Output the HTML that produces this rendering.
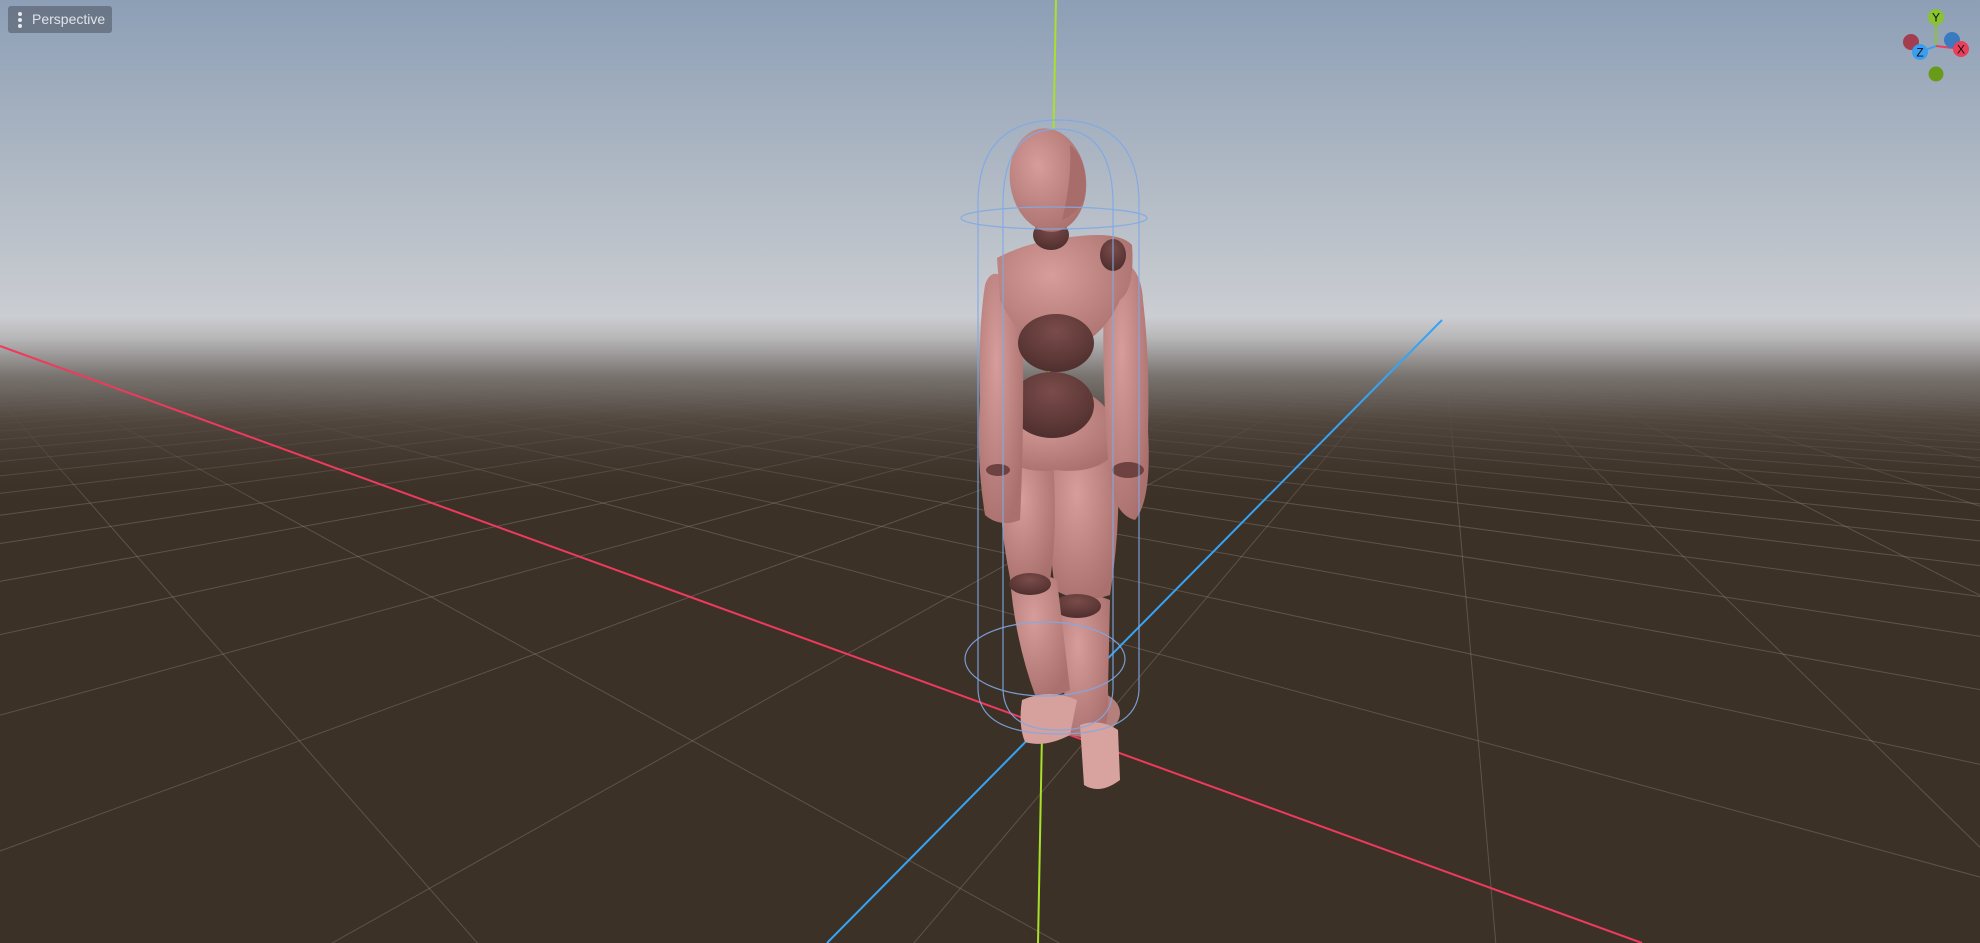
<!DOCTYPE html>
<html><head><meta charset="utf-8"><style>
html,body{margin:0;padding:0;width:1980px;height:943px;overflow:hidden;background:#3c3127}
svg{display:block;overflow:hidden;position:absolute;left:0;top:0}
.btn{position:absolute;left:8px;top:6px;width:104px;height:27px;background:rgba(95,105,120,0.75);border-radius:3px;font-family:"Liberation Sans",sans-serif;font-size:14px;color:#dfe3ea;line-height:27px}
.btn span{position:absolute;left:24px}
.dots{position:absolute;left:10px;top:6px;width:4px}
.dots i{display:block;width:4px;height:4px;border-radius:2px;background:#e6e9ee;margin-bottom:2px}
</style></head><body>
<svg id="s" width="1980" height="943" viewBox="0 0 1980 943" xmlns="http://www.w3.org/2000/svg">
<defs>
<linearGradient id="sky" x1="0" y1="0" x2="0" y2="1">
<stop offset="0" stop-color="#8d9fb6"/><stop offset="0.6" stop-color="#b4bcc6"/><stop offset="1" stop-color="#cdcfd3"/>
</linearGradient>
<linearGradient id="fog" x1="0" y1="0" x2="0" y2="1">
<stop offset="0" stop-color="#cbccd0" stop-opacity="1"/>
<stop offset="0.1" stop-color="#b9b9bb" stop-opacity="1"/>
<stop offset="0.3" stop-color="#7a7571" stop-opacity="1"/>
<stop offset="0.55" stop-color="#524840" stop-opacity="0.9"/>
<stop offset="1" stop-color="#3c3127" stop-opacity="0"/>
</linearGradient>
<radialGradient id="pk" cx="0.4" cy="0.35" r="0.7"><stop offset="0" stop-color="#d69d9a"/><stop offset="1" stop-color="#a9706e"/></radialGradient>
<radialGradient id="dk" cx="0.5" cy="0.3" r="0.7"><stop offset="0" stop-color="#7a4c4a"/><stop offset="1" stop-color="#4f2f2e"/></radialGradient>
</defs>
<rect width="1980" height="330" fill="url(#sky)"/>
<rect y="320" width="1980" height="623" fill="#3c3127"/>
<g id="grid" stroke="#9a948c" stroke-opacity="0.35" stroke-width="1" fill="none"></g>
<rect y="318" width="1980" height="190" fill="url(#fog)"/>
<line x1="0" y1="346" x2="1642" y2="943" stroke="#ef3a5d" stroke-width="2"/>
<line x1="1442" y1="320" x2="827" y2="943" stroke="#35a4f5" stroke-width="2"/>
<line x1="1056" y1="0" x2="1038" y2="943" stroke="#a8e02a" stroke-width="2"/>
<g>
<ellipse cx="1090" cy="713" rx="30" ry="22" fill="#b57f7c"/>
<path d="M1057 600 Q1080 588 1110 600 L1108 690 Q1110 735 1096 740 L1070 735 Q1062 690 1057 600Z" fill="url(#pk)"/>
<path d="M1080 725 Q1100 718 1118 730 L1120 780 Q1100 795 1084 785Z" fill="#d8a29f"/>
<path d="M1053 440 Q1090 430 1117 450 Q1122 520 1110 595 Q1080 605 1055 590 Q1045 520 1053 440Z" fill="url(#pk)"/>
<ellipse cx="1077" cy="606" rx="24" ry="12" fill="url(#dk)"/>
<path d="M1010 578 Q1040 570 1057 580 L1070 690 Q1050 700 1035 695 Q1015 640 1010 578Z" fill="url(#pk)"/>
<path d="M1022 700 Q1050 688 1077 700 L1070 735 Q1045 748 1025 742 Q1018 725 1022 700Z" fill="#d6a09d"/>
<path d="M1000 455 Q1030 450 1053 462 Q1058 530 1050 580 Q1025 590 1010 578 Q998 520 1000 455Z" fill="url(#pk)"/>
<ellipse cx="1030" cy="584" rx="21" ry="11" fill="url(#dk)"/>
<path d="M995 410 Q1040 390 1090 395 Q1118 410 1117 450 Q1100 475 1055 470 Q1015 475 998 450Z" fill="url(#pk)"/>
<ellipse cx="1052" cy="405" rx="42" ry="33" fill="url(#dk)"/>
<path d="M985 285 Q990 270 1000 275 L1022 300 Q1025 420 1020 520 Q1000 528 985 515 Q976 460 980 400 Q978 330 985 285Z" fill="url(#pk)"/>
<path d="M1105 260 Q1140 255 1143 300 Q1150 360 1148 430 Q1152 500 1135 520 Q1115 515 1110 480 Q1100 380 1105 260Z" fill="url(#pk)"/>
<ellipse cx="1128" cy="470" rx="16" ry="8" fill="#6d4240"/>
<ellipse cx="998" cy="470" rx="12" ry="6" fill="#6d4240"/>
<path d="M997 258 Q1030 240 1080 236 Q1120 232 1132 245 Q1135 290 1120 300 Q1100 345 1060 350 Q1020 345 1000 300Z" fill="url(#pk)"/>
<ellipse cx="1056" cy="343" rx="38" ry="29" fill="url(#dk)"/>
<ellipse cx="1113" cy="255" rx="13" ry="16" fill="url(#dk)"/>
<ellipse cx="1051" cy="235" rx="18" ry="15" fill="url(#dk)"/>
<ellipse cx="1048" cy="180" rx="38" ry="52" fill="url(#pk)" transform="rotate(-8 1048 180)"/>
<path d="M1070 145 Q1090 160 1084 200 Q1075 215 1062 220 Q1072 180 1070 145Z" fill="#a86d6b"/>
</g>
<g fill="none" stroke="#7fa9e6" stroke-width="1.2" stroke-opacity="0.9">
<path d="M978 690 L978 200 Q980 120 1058 120 Q1137 120 1139 200 L1139 690 Q1137 734 1058 734 Q980 734 978 690Z"/>
<path d="M1003 690 L1003 200 Q1005 129 1058 129 Q1111 129 1113 200 L1113 690 Q1111 730 1058 730 Q1005 730 1003 690Z"/>
<ellipse cx="1054" cy="218" rx="93" ry="11"/>
<ellipse cx="1045" cy="659" rx="80" ry="37"/>
</g>
<line x1="1936" y1="17" x2="1936" y2="46" stroke="#8ac230" stroke-width="2"/>
<line x1="1936" y1="46" x2="1961" y2="49" stroke="#e8405a" stroke-width="2"/>
<line x1="1936" y1="46" x2="1920" y2="52" stroke="#3a9ef0" stroke-width="2"/>
<circle cx="1911" cy="42" r="8" fill="#a33d50"/>
<circle cx="1952" cy="40" r="8" fill="#3a7ac0"/>
<circle cx="1936" cy="74" r="7.5" fill="#6a9a1a"/>
<circle cx="1936" cy="17" r="8" fill="#8ac230"/>
<circle cx="1961" cy="49" r="8" fill="#e8405a"/>
<circle cx="1920" cy="52" r="8" fill="#3a9ef0"/>
<g font-family="Liberation Sans,sans-serif" font-size="12" fill="#111" text-anchor="middle">
<text x="1936" y="21.5">Y</text><text x="1961" y="53.5">X</text><text x="1920" y="56.5">Z</text>
</g>
</svg>
<div class="btn"><div class="dots"><i></i><i></i><i></i></div><span>Perspective</span></div>
<script>
(function(){
var g=document.getElementById('grid');var O=[1042,725],VR=[-71,320],VB=[1442,320],k1=0.25,k2=0.25,off=0.85;
function P(u,v){var d=1+u*k1+v*k2;return [(O[0]+u*k1*VR[0]+v*k2*VB[0])/d,(O[1]+u*k1*VR[1]+v*k2*VB[1])/d];}
function cl(a){return [Math.max(-3000,Math.min(5000,a[0])),Math.max(-3000,Math.min(5000,a[1]))];}
var s='';
for(var n=-30;n<=30;n++){
 var u=n+off;
 var vmin=(0.05-1-u*k1)/k2; var a=P(u,vmin),b=P(u,120);
 s+='<line x1="'+a[0].toFixed(1)+'" y1="'+a[1].toFixed(1)+'" x2="'+b[0].toFixed(1)+'" y2="'+b[1].toFixed(1)+'"/>';
 var v=n; var umin=(0.05-1-v*k2)/k1; a=P(umin,v);b=P(120,v);
 s+='<line x1="'+a[0].toFixed(1)+'" y1="'+a[1].toFixed(1)+'" x2="'+b[0].toFixed(1)+'" y2="'+b[1].toFixed(1)+'"/>';
}
g.innerHTML=s;
})();
</script>
</body></html>
